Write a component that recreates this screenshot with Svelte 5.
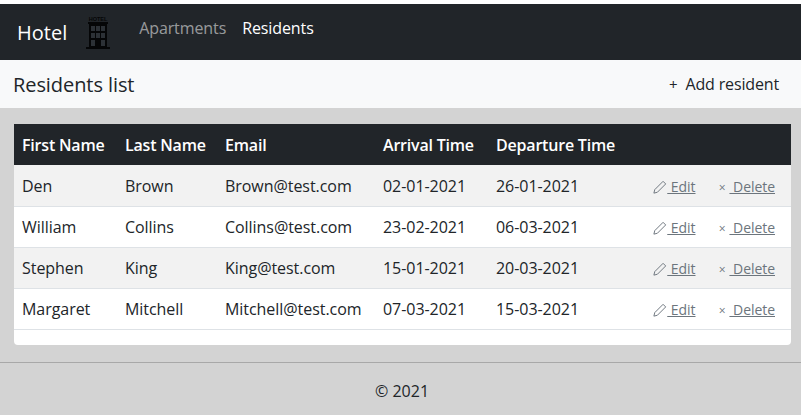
<script lang="ts">
	const residents = [
		{ first: 'Den', last: 'Brown', email: 'Brown@test.com', arrival: '02-01-2021', departure: '26-01-2021' },
		{ first: 'William', last: 'Collins', email: 'Collins@test.com', arrival: '23-02-2021', departure: '06-03-2021' },
		{ first: 'Stephen', last: 'King', email: 'King@test.com', arrival: '15-01-2021', departure: '20-03-2021' },
		{ first: 'Margaret', last: 'Mitchell', email: 'Mitchell@test.com', arrival: '07-03-2021', departure: '15-03-2021' }
	];
</script>

<div class="page">
	<nav class="navbar">
		<span class="brand">Hotel</span>
		<svg class="logo" viewBox="0 0 24 33" width="24" height="33" aria-hidden="true">
			<text x="12" y="5" text-anchor="middle" font-size="5.5" font-weight="700" font-family="Liberation Sans, sans-serif" fill="#050607">HOTEL</text>
			<path d="M2 6h20v2h-1v23h3v2H0v-2h3V8H2z" fill="#050607" />
			<path d="M5 10h4v5H5zM10 10h4v5h-4zM15 10h4v5h-4zM5 17h4v5H5zM10 17h4v5h-4zM15 17h4v5h-4zM5 24h4v6H5zM15 24h4v6h-4z" fill="#2c3136" />
		</svg>
		<a class="nav-link muted" href="#apartments">Apartments</a>
		<a class="nav-link" href="#residents">Residents</a>
	</nav>

	<header class="subheader">
		<h1>Residents list</h1>
		<a class="add" href="#add"><span class="plus">+</span>Add resident</a>
	</header>

	<main class="content">
		<div class="card">
			<table>
				<thead>
					<tr>
						<th class="c-first">First Name</th>
						<th class="c-last">Last Name</th>
						<th class="c-email">Email</th>
						<th class="c-arrival">Arrival Time</th>
						<th class="c-departure">Departure Time</th>
						<th></th>
					</tr>
				</thead>
				<tbody>
					{#each residents as r}
						<tr>
							<td>{r.first}</td>
							<td>{r.last}</td>
							<td>{r.email}</td>
							<td>{r.arrival}</td>
							<td>{r.departure}</td>
							<td class="actions">
								<a href="#edit" class="edit">
									<svg viewBox="0 0 16 16" width="14" height="14" aria-hidden="true">
										<path d="M11.5 1.5l3 3L5 14l-4 1 1-4z" fill="none" stroke="currentColor" stroke-width="1.1" />
									</svg>
									Edit</a>
								<a href="#delete" class="delete"><span class="x">×</span> Delete</a>
							</td>
						</tr>
					{/each}
				</tbody>
			</table>
		</div>
	</main>

	<footer class="footer">© 2021</footer>
</div>

<style>
	:global(body) {
		margin: 0;
		background: #fff;
		font-family: 'Open Sans', sans-serif;
		color: #212529;
	}

	.page {
		padding-top: 4px;
		height: 415px;
		box-sizing: border-box;
		display: flex;
		flex-direction: column;
		background: #d3d3d3;
		background-clip: content-box;
	}

	.navbar {
		height: 56px;
		background: #212529;
		display: flex;
		align-items: center;
		padding-left: 17px;
		flex: none;
	}

	.brand {
		color: #fff;
		font-size: 20px;
		margin-right: 19px;
	}

	.logo {
		margin-right: 29px;
	}

	.nav-link {
		color: #fff;
		font-size: 16px;
		letter-spacing: -0.1px;
		text-decoration: none;
		margin-right: 16px;
		margin-top: -9px;
	}

	.muted {
		color: rgba(255, 255, 255, 0.55);
	}

	.subheader {
		height: 48px;
		background: #f8f9fa;
		display: flex;
		align-items: center;
		justify-content: space-between;
		padding: 0 22px 0 13px;
		flex: none;
	}

	h1 {
		margin: 0;
		font-size: 20px;
		font-weight: 400;
		letter-spacing: -0.08px;
	}

	.add {
		color: #212529;
		text-decoration: none;
		font-size: 16px;
		letter-spacing: -0.15px;
	}

	.plus {
		margin-right: 8px;
		font-size: 15px;
	}

	.content {
		padding: 16px 10px 17px 14px;
		flex: none;
	}

	.card {
		background: #fff;
		border-radius: 0 0 4px 4px;
		padding-bottom: 15px;
	}

	table {
		width: 100%;
		table-layout: fixed;
		border-collapse: collapse;
		font-size: 16px;
	}

	th {
		background: #212529;
		color: #fff;
		text-align: left;
		font-weight: 600;
		letter-spacing: -0.2px;
		height: 41px;
		padding: 0 8px;
		box-sizing: border-box;
		white-space: nowrap;
	}

	td {
		height: 41px;
		padding: 1px 8px 0;
		box-sizing: border-box;
		border-bottom: 1px solid #dee2e6;
		white-space: nowrap;
		letter-spacing: -0.05px;
	}

	tbody tr:nth-child(odd) td {
		background: #f2f2f2;
	}

	.c-first { width: 103px; }
	.c-last { width: 100px; }
	.c-email { width: 158px; }
	.c-arrival { width: 113px; }
	.c-departure { width: 136px; }

	.actions {
		text-align: right;
		padding-right: 16px;
	}

	.actions a {
		color: #6c757d;
		font-size: 14px;
	}

	.edit svg {
		vertical-align: -2px;
	}

	.delete {
		margin-left: 19px;
	}

	.x {
		display: inline-block;
		font-size: 12px;
		margin-right: 4px;
	}

	.footer {
		flex: 1;
		border-top: 1px solid #a8a8a8;
		display: flex;
		align-items: center;
		justify-content: center;
		font-size: 16px;
		padding: 5px 0 0 3px;
	}
</style>
